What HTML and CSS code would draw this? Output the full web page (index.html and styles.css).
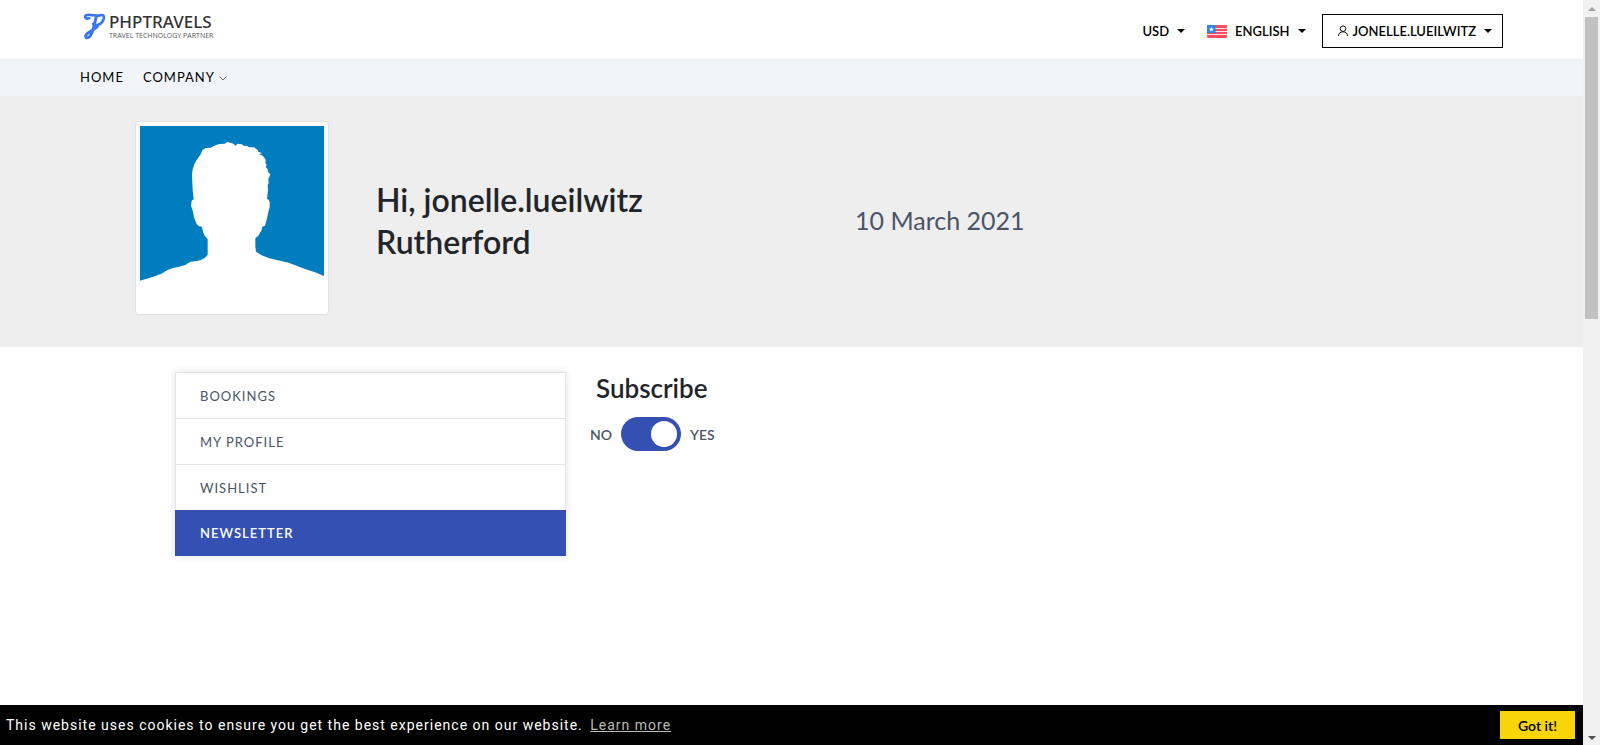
FILE: index.html
```html
<!DOCTYPE html>
<html lang="en">
<head>
<meta charset="utf-8">
<title>PHPTRAVELS - Newsletter</title>
<link rel="stylesheet" href="styles.css">
</head>
<body>
<div class="page">
  <header class="topbar">
    <a class="brand" href="#">
      <svg class="brand-mark" viewBox="68 38 70 86" fill="none" stroke="#3b74f0" stroke-linecap="round" aria-hidden="true">
        <path stroke-width="8" d="M87 56C74 60 70 48 80 46C95 43 108 52 124 46C133 45 134 56 128 65C121 77 106 79 99 73"/>
        <path stroke-width="9" d="M108 52C105 65 102 78 98 92C93 109 85 118 78 115C73 110 79 102 89 97C98 91 106 87 112 81"/>
      </svg>
      <span class="brand-text"><span class="brand-name">PHPTRAVELS</span><span class="brand-tag">TRAVEL TECHNOLOGY PARTNER</span></span>
    </a>
    <div class="tools">
      <button class="tool" type="button">USD <span class="caret"></span></button>
      <button class="tool" type="button">
        <svg class="flag" viewBox="0 0 20 13" aria-hidden="true"><rect width="20" height="13" rx="1" fill="#ff4b5f"/><path d="M8 3.500h12M8 6.500h12M0 9.500h20" stroke="#fff" stroke-opacity=".85"/><path d="M0 0h8.500v8H0z" fill="#2b87e3"/><path d="M4.400 2l.7 1.600 1.700.1-1.300 1.200.4 1.600-1.500-.9-1.500.9.4-1.600L2 3.700l1.700-.1z" fill="#fff"/></svg>
        ENGLISH <span class="caret"></span></button>
      <button class="tool tool-user" type="button">
        <svg class="person" viewBox="0 0 12 12" fill="none" stroke="#111" aria-hidden="true"><circle cx="6" cy="3.700" r="2.800"/><path d="M1.500 11c0-2.700 1.800-4.200 4.500-4.200s4.500 1.500 4.500 4.200"/></svg>
        JONELLE.LUEILWITZ <span class="caret"></span></button>
    </div>
  </header>
  <nav class="nav">
    <a href="#">HOME</a>
    <a href="#">COMPANY <svg class="chevron" viewBox="0 0 8 5" fill="none" stroke="#777" aria-hidden="true"><path d="M.5.5 4 4 7.500.5"/></svg></a>
  </nav>
  <section class="hero">
    <svg class="avatar" viewBox="60 48 552 552" role="img" aria-label="Profile picture">
      <path fill="#007dbf" d="M60 48H612V498L585 487L555 477L530 467L506 458L480 452L448 445L425 436L408 425L406 410V385L415 377L424 362L427 350L435 347L441 325L445 306L449 292V277L446 269L441 267L444 240L443 224L446 220L445 207L451 193L445 187L442 176L437 171L440 165L436 160L437 149L429 138L417 132L427 130L415 125L413 120L402 112H387L383 108L370 107L366 103L352 101L348 107L337 100L322 96L314 101L297 102L283 107L272 113L257 114L247 121L242 133L230 150L223 163L218 178L216 196L218 240L221 268L215 272L213 287L219 305L222 322L230 342L237 349L246 350L249 366L254 377L263 388V434L255 443L243 450L231 453L212 455L204 460L194 466L174 471L156 475L143 480L124 491L100 500L60 512Z"/>
    </svg>
    <h1 class="greeting">Hi, jonelle.lueilwitz Rutherford</h1>
    <p class="date">10 March 2021</p>
  </section>
  <main class="content">
    <nav class="menu" aria-label="Account">
      <a href="#">BOOKINGS</a>
      <a href="#">MY PROFILE</a>
      <a href="#">WISHLIST</a>
      <a class="active" href="#">NEWSLETTER</a>
    </nav>
    <section class="panel">
      <h2 class="panel-title">Subscribe</h2>
      <label class="switch-row"><span>NO</span><input class="switch" type="checkbox" checked><span>YES</span></label>
    </section>
  </main>
  <footer class="cookies">
    <p class="cookie-text">This website uses cookies to ensure you get the best experience on our website. <a href="#">Learn more</a></p>
    <button class="accept" type="button">Got it!</button>
  </footer>
</div>
<div class="scrollbar" aria-hidden="true"><span class="arrow arrow-up"></span><span class="thumb"></span><span class="arrow arrow-down"></span></div>
</body>
</html>
```
FILE: styles.css
```css
* { box-sizing: border-box; }
body {
  margin: 0;
  display: flex;
  height: 100vh;
  overflow: hidden;
  background: #fff;
  color: #212529;
  font-family: Lato, "Open Sans", sans-serif;
}
h1, h2, p { margin: 0; }
a { color: inherit; text-decoration: none; }
button { font: inherit; cursor: pointer; }

.page { flex: 1; min-width: 0; display: flex; flex-direction: column; }

.topbar {
  display: flex;
  justify-content: space-between;
  align-items: flex-start;
  height: 60px;
  padding: 0 80px;
  border-bottom: 1px solid #ebedef;
}
.brand { display: flex; gap: 3px; padding: 12px 0 0 3px; }
.brand-mark { width: 23px; height: 29px; }
.brand-text { display: flex; flex-direction: column; }
.brand-name { font: 500 17px/20px "Noto Sans", sans-serif; color: #333; }
.brand-tag { font: 400 7px/8px "Open Sans", sans-serif; color: #555; }

.tools { display: flex; align-items: center; padding-top: 14px; }
.tool {
  display: flex;
  align-items: center;
  gap: 8px;
  margin-right: 22px;
  padding: 0;
  height: 34px;
  border: 0;
  background: none;
  color: #000;
  font-size: 13px;
  font-weight: 600;
}
.tool-user { margin: 0 0 0 -6px; padding: 0 10px 0 14px; border: 1px solid #000; }
.caret { border: 4px solid transparent; border-top-color: #000; border-bottom: 0; }
.flag { width: 20px; height: 13px; }
.person { width: 12px; height: 12px; margin-right: -4px; }

.nav {
  display: flex;
  align-items: center;
  gap: 19px;
  height: 36px;
  padding: 0 80px 2px;
  background: #f1f5f9;
  color: #000;
  font-size: 13px;
  line-height: 20px;
  letter-spacing: 1px;
}
.chevron { width: 8px; height: 5px; vertical-align: middle; }

.hero {
  display: grid;
  grid-template-columns: 194px 432px 1fr;
  column-gap: 47px;
  align-items: center;
  padding: 25px 80px 32px 135px;
  background: #eee;
}
.avatar {
  display: block;
  width: 194px;
  height: 194px;
  padding: 4px;
  border: 1px solid #dee2e6;
  border-radius: 4px;
  background: #fff;
}
.greeting { max-width: 320px; padding-top: 6px; font-size: 32px; line-height: 42px; font-weight: 600; }
.date { padding-top: 4px; font-size: 25px; line-height: 32px; color: #4a5568; }

.content { flex: 1; display: flex; align-items: flex-start; gap: 24px; padding: 25px 175px; }
.menu {
  flex: 0 0 391px;
  border: 1px solid #e4e5e6;
  border-bottom: 0;
  box-shadow: 0 0 8px rgba(0, 0, 0, .12);
  font-size: 13px;
  letter-spacing: 1px;
  color: #4a5568;
}
.menu a { display: block; height: 46px; padding: 0 24px; line-height: 46px; border-bottom: 1px solid #e4e5e6; }
.menu a:nth-child(3) { height: 45px; border: 0; }
.menu .active { margin: 0 -1px; padding: 0 25px; border: 0; background: #3350b2; color: #fff; font-weight: 600; }

.panel-title { padding-left: 6px; font-size: 26px; line-height: 32px; font-weight: 600; }
.switch-row { display: flex; align-items: center; gap: 9px; padding-top: 13px; font-size: 14px; font-weight: 600; color: #4a5568; }
.switch {
  appearance: none;
  display: flex;
  justify-content: flex-end;
  width: 60px;
  height: 34px;
  margin: 0;
  padding: 4px;
  border-radius: 17px;
  background: #3350b2;
}
.switch::before { content: ""; width: 26px; height: 26px; border-radius: 50%; background: #fff; }
.switch:not(:checked) { justify-content: flex-start; background: #ccc; }

.cookies {
  display: flex;
  align-items: center;
  justify-content: space-between;
  height: 40px;
  padding: 0 8px 0 6px;
  background: #000;
  color: #fff;
}
.cookie-text { font-family: Roboto, sans-serif; font-size: 14px; letter-spacing: 1px; }
.cookie-text a { margin-left: 3px; color: #bbb; text-decoration: underline; }
.accept { width: 75px; height: 28px; padding: 0; border: 0; background: #f8d509; color: #000; font-size: 14px; font-weight: 600; }

.scrollbar { display: flex; flex-direction: column; align-items: center; flex: 0 0 17px; padding: 7px 0 5px; background: #f1f1f1; }
.arrow { border: 4px solid transparent; }
.arrow-up { border-bottom-color: #a3a3a3; border-top: 0; }
.arrow-down { margin-top: auto; border-top-color: #505050; border-bottom: 0; }
.thumb { width: 13px; height: 302px; margin-top: 6px; background: #c1c1c1; }
```
